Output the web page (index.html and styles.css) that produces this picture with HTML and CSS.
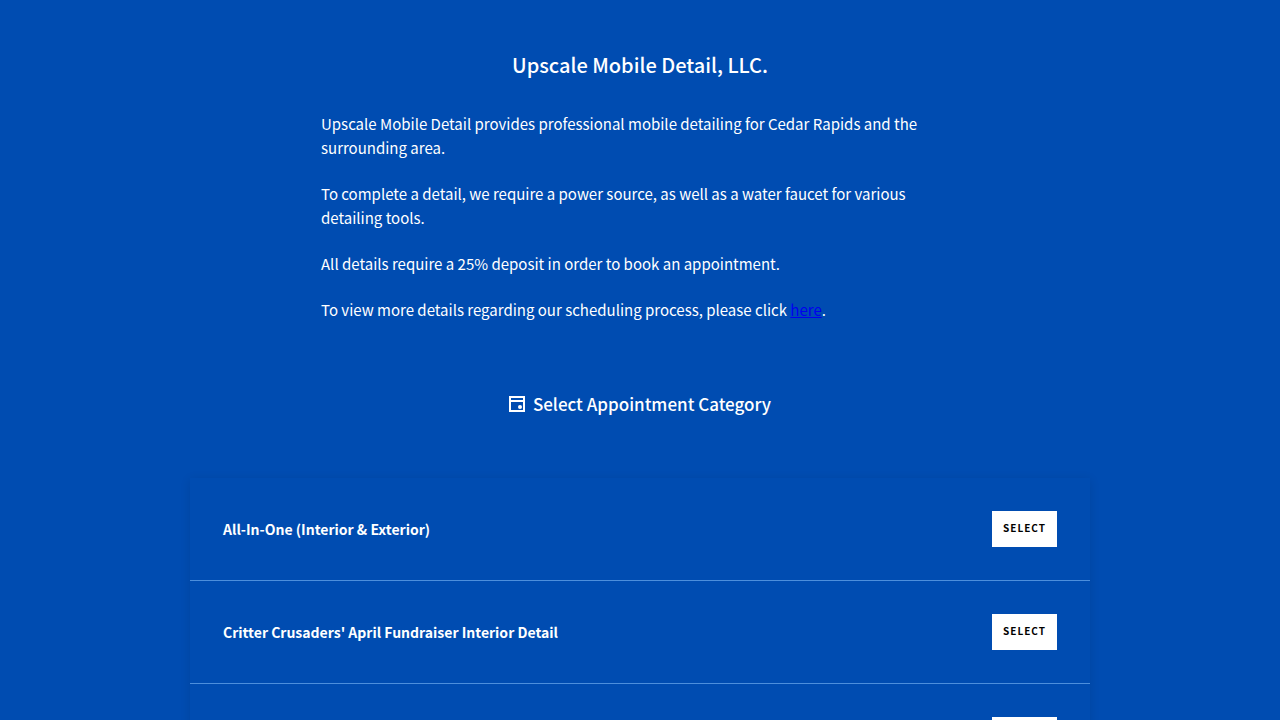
FILE: index.html
```html
<!DOCTYPE html>
<html lang="en">
  <head>
    <meta charset="utf-8">
    <meta name="viewport" content="width=device-width, initial-scale=1">
    <title>Upscale Mobile Detail, LLC.</title>
    <link rel="stylesheet" href="styles.css">
  </head>

  <body>
    <header class="intro">
      <h1>Upscale Mobile Detail, LLC.</h1>
      <div class="description">
        <p>Upscale Mobile Detail provides professional mobile detailing for Cedar Rapids and the surrounding area.</p>
        <p>To complete a detail, we require a power source, as well as a water faucet for various detailing tools.</p>
        <p>All details require a 25% deposit in order to book an appointment.</p>
        <p>To view more details regarding our scheduling process, please click <a href="#">here</a>.</p>
      </div>
    </header>

    <main>
      <h2 class="step-title">
        <svg class="icon" width="16" height="16" viewBox="0 0 16 16" aria-hidden="true">
          <path d="M1 1h14v14H1z" fill="none" stroke="currentColor" stroke-width="2" />
          <path d="M1 4h14v2H1z" fill="currentColor" />
          <circle cx="11" cy="11" r="2" fill="currentColor" />
        </svg>
        Select Appointment Category
      </h2>

      <ul class="categories">
        <li class="category">
          <span class="category-name" id="cat-1">All-In-One (Interior &amp; Exterior)</span>
          <button type="button" class="select-button" aria-describedby="cat-1">Select</button>
        </li>
        <li class="category">
          <span class="category-name" id="cat-2">Critter Crusaders' April Fundraiser Interior Detail</span>
          <button type="button" class="select-button" aria-describedby="cat-2">Select</button>
        </li>
        <li class="category">
          <span class="category-name"></span>
          <button type="button" class="select-button">Select</button>
        </li>
      </ul>
    </main>
  </body>
</html>
```

FILE: styles.css
```css
body {
  margin: 0;
  background-color: #004cb1;
  color: #fff;
  font-family: "Noto Sans CJK SC", "Noto Sans", sans-serif;
  font-size: 15px;
  line-height: 24px;
}

.intro {
  padding: 49px 20px 0;
}

h1 {
  margin: 0 0 31px;
  font-size: 20px;
  font-weight: 500;
  line-height: 32px;
  text-align: center;
}

.description {
  max-width: 638px;
  margin: 0 auto;
}

/* keeps the intro text clear of the right edge */
.description p {
  margin: 0 0 22px;
  padding-right: 40px;
}

.description a {
  color: #0000ee;
}

.step-title {
  display: flex;
  align-items: center;
  justify-content: center;
  gap: 8px;
  margin: 70px 20px 62px;
  font-size: 17px;
  font-weight: 500;
  line-height: 24px;
}

.categories {
  list-style: none;
  max-width: 900px;
  margin: 0 auto;
  padding: 0;
  box-shadow: 0 2px 10px rgba(0, 0, 0, 0.1);
}

.category {
  display: flex;
  align-items: center;
  justify-content: space-between;
  gap: 20px;
  padding: 33px;
  border-bottom: 1px solid #4d8fdc;
}

.category-name {
  font-size: 14px;
  font-weight: 700;
}

.select-button {
  height: 36px;
  padding: 0 11px 3px;
  border: 0;
  background-color: #fff;
  color: #000;
  font-family: inherit;
  font-size: 10px;
  font-weight: 700;
  letter-spacing: 1px;
  text-transform: uppercase;
  cursor: pointer;
}

.select-button:hover {
  background-color: #e6eef8;
}
```
